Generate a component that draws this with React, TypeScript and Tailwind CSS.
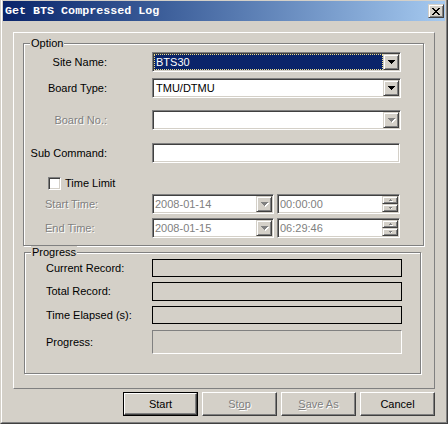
import React from "react";

const raised =
  "bg-[#d4d0c8] border border-t-[#d4d0c8] border-l-[#d4d0c8] border-r-[#404040] border-b-[#404040] shadow-[inset_1px_1px_0_#fff,inset_-1px_-1px_0_#808080]";
const sunken =
  "border border-t-[#808080] border-l-[#808080] border-r-white border-b-white shadow-[inset_1px_1px_0_#404040,inset_-1px_-1px_0_#d4d0c8] p-[1px]";
const etched =
  "border border-[#808080] shadow-[inset_1px_1px_0_#fff,1px_1px_0_#fff]";
const disabledText = "text-[#808080] [text-shadow:1px_1px_0_#fff]";

function Arrow({ disabled }: { disabled?: boolean }) {
  const rows = [
    [0, 7],
    [1, 5],
    [2, 3],
    [3, 1],
  ];
  return (
    <svg width="8" height="5" viewBox="0 0 8 5" shapeRendering="crispEdges">
      {disabled &&
        rows.map(([x, w], i) => (
          <rect key={"s" + i} x={x + 1} y={i + 1} width={w} height="1" fill="#fff" />
        ))}
      {rows.map(([x, w], i) => (
        <rect key={i} x={x} y={i} width={w} height="1" fill={disabled ? "#808080" : "#000"} />
      ))}
    </svg>
  );
}

function DropButton({ disabled }: { disabled?: boolean }) {
  return (
    <div className={`${raised} w-[16px] h-full flex items-center justify-center pl-[1px]`}>
      <Arrow disabled={disabled} />
    </div>
  );
}

function SpinButtons() {
  return (
    <div className="w-[16px] h-full flex flex-col">
      <div className={`${raised} flex-1 flex items-center justify-center`}>
        <svg width="5" height="3" viewBox="0 0 5 3" shapeRendering="crispEdges">
          <rect x="2" y="0" width="1" height="1" fill="#808080" />
          <rect x="1" y="1" width="3" height="1" fill="#808080" />
          <rect x="2" y="2" width="3" height="1" fill="#fff" />
        </svg>
      </div>
      <div className={`${raised} flex-1 flex items-center justify-center`}>
        <svg width="5" height="3" viewBox="0 0 5 3" shapeRendering="crispEdges">
          <rect x="1" y="0" width="3" height="1" fill="#808080" />
          <rect x="2" y="1" width="1" height="1" fill="#808080" />
          <rect x="3" y="1" width="1" height="1" fill="#fff" />
        </svg>
      </div>
    </div>
  );
}

function Label({ children, disabled, className = "" }: { children: React.ReactNode; disabled?: boolean; className?: string }) {
  return (
    <div className={`${className} ${disabled ? disabledText : "text-black"} whitespace-nowrap`}>{children}</div>
  );
}

function Button({
  children,
  isDefault,
  disabled,
}: {
  children: React.ReactNode;
  isDefault?: boolean;
  disabled?: boolean;
}) {
  return (
    <div className={`w-[75px] h-[24px] bg-[#d4d0c8] ${isDefault ? "border border-black" : ""}`}>
      <div
        className={`border border-t-white border-l-white border-r-[#404040] border-b-[#404040] shadow-[inset_-1px_-1px_0_#808080] w-full h-full flex items-center justify-center ${
          disabled ? disabledText : "text-black"
        }`}
      >
        {children}
      </div>
    </div>
  );
}

function CloseGlyph() {
  return (
    <svg width="8" height="7" viewBox="0 0 8 7" shapeRendering="crispEdges">
      {[0, 1, 2, 3, 4, 5, 6].map((i) => (
        <React.Fragment key={i}>
          <rect x={i} y={i} width="2" height="1" fill="#000" />
          <rect x={6 - i} y={i} width="2" height="1" fill="#000" />
        </React.Fragment>
      ))}
    </svg>
  );
}

export default function App() {
  return (
    <div className="w-[448px] h-[424px] bg-[#d4d0c8] border-r border-b border-l border-r-[#404040] border-b-[#404040] border-l-[#d4d0c8] font-['Liberation_Sans',Arial,sans-serif] text-[11px] leading-[13px] select-none">
      <div className="w-full h-full border-r border-b border-l border-r-[#808080] border-b-[#808080] border-l-white pt-[1px] px-[1px] pb-[1px] flex flex-col">
        {/* title bar */}
        <div className="h-[20px] shrink-0 bg-gradient-to-r from-[#0a246a] to-[#a6caf0] flex items-center pl-[2px] pr-[1px]">
          <div className="flex-1 text-white font-bold font-['Liberation_Mono',monospace] text-[11.7px]">
            Get BTS Compressed Log
          </div>
          <div className={`${raised} w-[16px] h-[14px] flex items-center justify-center`}>
            <CloseGlyph />
          </div>
        </div>

        {/* body frame */}
        <div className="ml-[10px] mt-[11px] w-[422px] h-[357px] border border-t-white border-l-white border-r-[#808080] border-b-[#808080]">
          {/* Option group */}
          <div className={`${etched} relative ml-[9px] mt-[10px] w-[401px] h-[203px]`}>
            <span className="absolute left-[6px] -top-[7px] px-[1px] bg-[#d4d0c8]">Option</span>

            <div className="flex items-center mt-[8px] h-[20px]">
              <Label className="w-[83px] text-right">Site Name:</Label>
              <div className={`${sunken} ml-[45px] w-[249px] h-full bg-white flex`}>
                <div className="flex-1 flex items-center">
                  <div className="w-full h-full bg-[#0a246a] border border-dotted border-[#f0e08a] text-white flex items-center pl-[1px]">
                    BTS30
                  </div>
                </div>
                <DropButton />
              </div>
            </div>

            <div className="flex items-center mt-[6px] h-[20px]">
              <Label className="w-[83px] text-right">Board Type:</Label>
              <div className={`${sunken} ml-[45px] w-[249px] h-full bg-white flex`}>
                <div className="flex-1 flex items-center pl-[2px]">TMU/DTMU</div>
                <DropButton />
              </div>
            </div>

            <div className="flex items-center mt-[12px] h-[20px]">
              <Label className="w-[83px] text-right" disabled>
                Board No.:
              </Label>
              <div className={`${sunken} ml-[45px] w-[249px] h-full bg-white flex`}>
                <div className="flex-1" />
                <DropButton disabled />
              </div>
            </div>

            <div className="flex items-center mt-[13px] h-[20px]">
              <Label className="w-[83px] text-right">Sub Command:</Label>
              <div className={`${sunken} ml-[45px] w-[248px] h-full bg-white`} />
            </div>

            <div className="flex items-center mt-[14px] h-[13px] pl-[24px]">
              <div className={`${sunken} w-[13px] h-[13px] bg-white`} />
              <Label className="ml-[4px]">Time Limit</Label>
            </div>

            {[
              ["Start Time:", "2008-01-14", "00:00:00"],
              ["End Time:", "2008-01-15", "06:29:46"],
            ].map(([label, date, time]) => (
              <div key={label} className="flex items-center mt-[4px] h-[20px] pl-[21px]">
                <Label className="w-[107px]" disabled>
                  {label}
                </Label>
                <div className={`${sunken} w-[122px] h-full bg-white flex`}>
                  <div className="flex-1 flex items-center pl-[1px] text-[#808080]">{date}</div>
                  <DropButton disabled />
                </div>
                <div className={`${sunken} ml-[3px] w-[123px] h-full bg-white flex`}>
                  <div className="flex-1 flex items-center pl-[1px] text-[#808080]">{time}</div>
                  <SpinButtons />
                </div>
              </div>
            ))}
          </div>

          {/* Progress group */}
          <div className={`${etched} relative ml-[10px] mt-[6px] w-[397px] h-[122px]`}>
            <span className="absolute left-[6px] -top-[7px] px-[1px] bg-[#d4d0c8]">Progress</span>

            {[
              ["Current Record:", 6, 18],
              ["Total Record:", 5, 19],
              ["Time Elapsed (s):", 5, 18],
            ].map(([label, mt, h]) => (
              <div
                key={label as string}
                className="flex items-center pl-[21px]"
                style={{ marginTop: mt as number, height: h as number }}
              >
                <Label className="w-[106px]">{label}</Label>
                <div className="w-[250px] h-full border border-black" />
              </div>
            ))}

            <div className="flex items-center pl-[21px] mt-[6px] h-[24px]">
              <Label className="w-[106px]">Progress:</Label>
              <div className="w-[250px] h-full border border-t-[#808080] border-l-[#808080] border-r-white border-b-white" />
            </div>
          </div>
        </div>

        {/* buttons */}
        <div className="flex gap-[4px] ml-[120px] mt-[3px]">
          <Button isDefault>Start</Button>
          <Button disabled>
            <span>
              St<span className="underline">o</span>p
            </span>
          </Button>
          <Button disabled>
            <span>
              <span className="underline">S</span>ave As
            </span>
          </Button>
          <Button>Cancel</Button>
        </div>
      </div>
    </div>
  );
}
